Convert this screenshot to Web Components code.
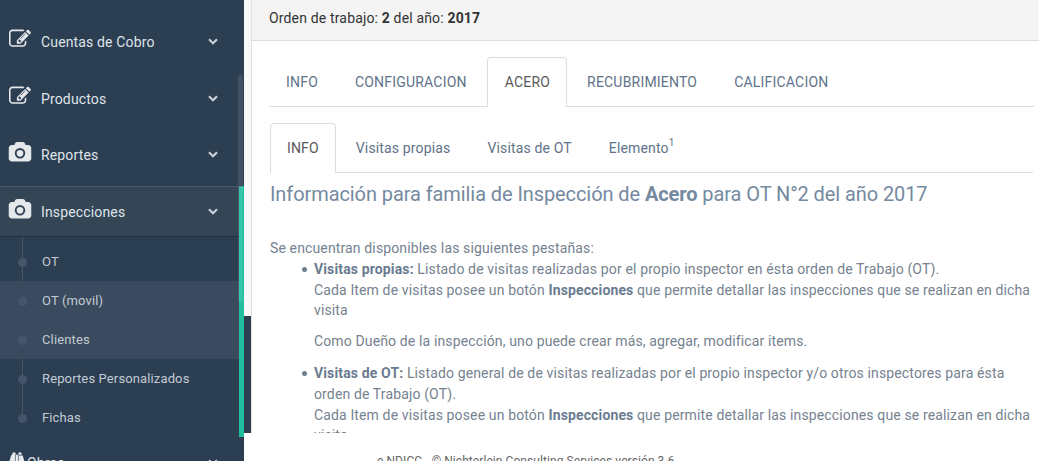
<!DOCTYPE html>
<html lang="es">
<head>
<meta charset="utf-8">
<title>Orden de trabajo</title>
<style>
html,body{margin:0;height:461px;overflow:hidden;background:#fff;font-family:Roboto,"Liberation Sans",sans-serif}
</style>
</head>
<body>
<template id="t-icon-edit"><svg viewBox="0 0 1792 1792" width="22" height="22" fill="currentColor"><path d="M888 1184l116-116-152-152-116 116v56h96v96h56zm440-720q-16-16-33 1l-350 350q-17 17-1 33t33-1l350-350q17-17 1-33zm80 594v190q0 119-84.5 203.5t-203.5 84.5h-832q-119 0-203.5-84.5t-84.5-203.5v-832q0-119 84.5-203.5t203.5-84.5h832q63 0 117 25 15 7 18 23 3 17-9 29l-49 49q-14 14-32 8-23-6-45-6h-832q-66 0-113 47t-47 113v832q0 66 47 113t113 47h832q66 0 113-47t47-113v-126q0-13 9-22l64-64q15-15 35-7t20 29zm-96-738l288 288-672 672h-288v-288zm444 132l-92 92-288-288 92-92q28-28 68-28t68 28l152 152q28 28 28 68t-28 68z"/></svg></template>
<template id="t-icon-camera"><svg viewBox="0 0 2048 1792" width="24" height="21" fill="currentColor" style="margin-left:-1px"><path d="M1024 672q119 0 203.500 84.500t84.500 203.500-84.500 203.500-203.500 84.500-203.500-84.500-84.500-203.500 84.500-203.500 203.500-84.500zm704-416q106 0 181 75t75 181v896q0 106-75 181t-181 75h-1408q-106 0-181-75t-75-181v-896q0-106 75-181t181-75h224l51-136q19-49 69.500-84.500t103.500-35.500h512q53 0 103.500 35.500t69.500 84.500l51 136h224zm-704 1152q185 0 316.500-131.500t131.500-316.500-131.500-316.500-316.500-131.500-316.500 131.500-131.500 316.500 131.500 316.500 316.500 131.500z"/></svg></template>
<template id="t-icon-binoculars"><svg viewBox="0 0 1792 1792" width="16" height="16" fill="currentColor"><path d="M704 320v768q0 26-19 45t-45 19v576q0 26-19 45t-45 19h-512q-26 0-45-19t-19-45v-512l249-873q7-23 31-23h424zm320 0v704h-256v-704h256zm768 960v512q0 26-19 45t-45 19h-512q-26 0-45-19t-19-45v-576q-26 0-45-19t-19-45v-768h424q24 0 31 23zm-1056-1184v224h-352v-224q0-14 9-23t23-9h288q14 0 23 9t9 23zm672 0v224h-352v-224q0-14 9-23t23-9h288q14 0 23 9t9 23z"/></svg></template>

<script>
function shadow(host, html){
  const r = host.attachShadow({mode:'open'});
  r.innerHTML = html;
  return r;
}
class SideItem extends HTMLElement{
  connectedCallback(){
    if(this.shadowRoot) return;
    const icon = this.getAttribute('icon');
    const tpl = document.getElementById('t-icon-'+icon);
    const r = shadow(this,`<style>
      :host{display:flex;flex:none;align-items:center;height:var(--row-h,51px);color:#dfe4e9;font-size:14px;letter-spacing:.15px;box-sizing:border-box;padding:0 var(--row-pr,26px) 0 9px}
      .ic{display:flex;justify-content:flex-start;width:32px;flex:none;color:#e6e9ec;margin-top:-5px}
      :host([icon=binoculars]) .ic{width:18px;padding-left:0;margin-top:-5px}
      :host([icon=camera]) .ic{margin-top:-4px}
      .lb{flex:1;white-space:nowrap}
      svg.ch{flex:none;margin-top:-1px}
    </style><span class="ic"></span><span class="lb"><slot></slot></span>
    <svg class="ch" width="10" height="7" viewBox="0 0 10 7"><path d="M1 1.200 5 5.200 9 1.200" fill="none" stroke="#c8d0d8" stroke-width="2.200"/></svg>`);
    r.querySelector('.ic').appendChild(tpl.content.cloneNode(true));
  }
}
class SideGroup extends HTMLElement{
  constructor(){super();shadow(this,`<style>
    :host{display:block;flex:none;border-top:1px solid #4a5a6a;border-right:5px solid #1fbf9f;margin-top:6px;box-sizing:border-box}
    .head{background:#344556;height:49px;display:block}
    .sub{display:block;border-top:1px solid #24303e;padding-top:5px;position:relative}
    .sub::before{content:"";position:absolute;left:22px;top:0;bottom:20px;width:1px;background:#445568}
  </style><div class="head"><slot name="head"></slot></div><div class="sub"><slot></slot></div>`);}
}
class SubItem extends HTMLElement{
  constructor(){super();shadow(this,`<style>
    :host{display:flex;align-items:center;height:39px;padding-left:42px;font-size:13px;letter-spacing:.13px;color:#c3cad2;position:relative;white-space:nowrap}
    :host([hl]){background:#3a4b5f}
    :host::before{content:"";position:absolute;left:18px;top:16px;width:9px;height:9px;border-radius:50%;background:#45566a}
    span{margin-top:-1px}
  </style><span><slot></slot></span>`);}
}
class AppSidebar extends HTMLElement{
  constructor(){super();shadow(this,`<style>
    :host{display:flex;flex-direction:column;flex:none;width:244px;height:461px;background:#2c3e52;overflow:hidden;position:relative;padding-top:16px;box-sizing:border-box}
    .list{display:flex;flex-direction:column;gap:6px;flex:none}
    .thumb{position:absolute;left:238px;top:75px;width:5px;height:227px;border-radius:3px;background:rgba(255,255,255,.1)}
  </style><div class="list"><slot name="top"></slot></div><slot></slot><div class="thumb"></div>`);}
}
class AppGutter extends HTMLElement{
  constructor(){super();shadow(this,`<style>
    :host{display:flex;flex-direction:column;flex:none;width:8px;height:433px;box-sizing:border-box;border-right:1px solid #e2e2e2}
    .a{height:316px;background:#f8f8f8}
    .b{flex:1;background:#2c3e52}
  </style><div class="a"></div><div class="b"></div>`);}
}
class WorkHeader extends HTMLElement{
  constructor(){super();shadow(this,`<style>
    :host{display:flex;align-items:center;height:41px;box-sizing:border-box;flex:none;background:#f4f4f4;border-bottom:1px solid #ddd;padding:0 0 4px 17px;font-size:14px;letter-spacing:.16px;color:#333}
    ::slotted(b){font-weight:700}
  </style><div><slot></slot></div>`);}
}
class TabBar extends HTMLElement{
  constructor(){super();shadow(this,`<style>
    :host{display:flex;height:50px;box-sizing:border-box;border-bottom:1px solid #ddd}
  </style><slot></slot>`);}
}
class TabItem extends HTMLElement{
  constructor(){super();shadow(this,`<style>
    :host{display:flex;align-items:center;height:50px;box-sizing:border-box;padding:0 19px 1px 16px;border:1px solid transparent;border-bottom:0;font-size:14px;letter-spacing:var(--ls,.2px);color:#607389;white-space:nowrap;border-radius:4px 4px 0 0}
    :host([active]){border-color:#ddd;background:#fff;color:#5a5a5a;padding:0 var(--pr,16px) 1px var(--pl,17px);margin-right:3px}
    ::slotted(sup){font-size:10px;line-height:0;position:relative;top:-1px}
  </style><span><slot></slot></span>`);}
}
class InfoBody extends HTMLElement{
  constructor(){super();shadow(this,`<style>
    :host{display:block;color:#75828f;font-size:14px;letter-spacing:.135px;line-height:20.800px}
    ::slotted(h3){margin:0;font-size:20px;font-weight:400;letter-spacing:-.085px;color:#75899f;line-height:28px;padding-top:7px;height:58px;box-sizing:content-box}
  </style><slot></slot>`);}
}
class BulletList extends HTMLElement{
  constructor(){super();shadow(this,`<style>
    :host{display:block;padding-left:44px}
  </style><slot></slot>`);}
}
class BulletItem extends HTMLElement{
  constructor(){super();shadow(this,`<style>
    :host{display:block;position:relative;margin-bottom:11px}
    :host::before{content:"";position:absolute;left:-12px;top:8px;width:5px;height:5px;border-radius:50%;background:#6f7f90}
    ::slotted(b){color:#6a7b90}
    ::slotted(p){margin:10px 0 0}
  </style><slot></slot>`);}
}
class AppFooter extends HTMLElement{
  constructor(){super();shadow(this,`<style>
    :host{display:block;height:28px;background:#fff;padding:21px 0 0 133px;box-sizing:border-box;font-size:12px;letter-spacing:.07px;line-height:15px;color:#666;white-space:nowrap;overflow:hidden}
  </style><slot></slot>`);}
}
class AppMain extends HTMLElement{
  constructor(){super();shadow(this,`<style>
    :host{display:flex;flex-direction:column;flex:1;min-width:0;height:433px;overflow:hidden}
    .body{flex:1;min-height:0;overflow:hidden;padding:16px 5px 0 17px}
    .inner{margin-top:16px;margin-left:1px;margin-right:1px}
  </style><slot name="head"></slot><div class="body"><slot name="outer"></slot><div class="inner"><slot name="inner"></slot><slot></slot></div></div>`);}
}
class AppShell extends HTMLElement{
  constructor(){super();shadow(this,`<style>
    :host{display:flex;width:1039px;height:461px;overflow:hidden;background:#fff;position:relative}
    .right{flex:1;min-width:0;display:flex;flex-direction:column}
    .top{display:flex;height:433px}
  </style><slot name="side"></slot><div class="right"><div class="top"><slot name="gutter"></slot><slot name="main"></slot></div><slot name="foot"></slot></div>`);}
}
[['app-shell',AppShell],['app-sidebar',AppSidebar],['side-item',SideItem],['side-group',SideGroup],['sub-item',SubItem],['app-gutter',AppGutter],['app-main',AppMain],['work-header',WorkHeader],['tab-bar',TabBar],['tab-item',TabItem],['info-body',InfoBody],['bullet-list',BulletList],['bullet-item',BulletItem],['app-footer',AppFooter]].forEach(([n,c])=>customElements.define(n,c));
</script>

<app-shell>
  <app-sidebar slot="side">
    <side-item slot="top" icon="edit">Cuentas de Cobro</side-item>
    <side-item slot="top" icon="edit">Productos</side-item>
    <side-item slot="top" icon="camera" style="margin-top:-1px">Reportes</side-item>
    <side-group>
      <side-item slot="head" icon="camera" style="--row-h:49px;--row-pr:21px">Inspecciones</side-item>
      <sub-item>OT</sub-item>
      <sub-item hl>OT (movil)</sub-item>
      <sub-item hl>Clientes</sub-item>
      <sub-item>Reportes Personalizados</sub-item>
      <sub-item>Fichas</sub-item>
    </side-group>
    <side-item icon="binoculars">Obras</side-item>
  </app-sidebar>
  <app-gutter slot="gutter"></app-gutter>
  <app-main slot="main">
    <work-header slot="head">Orden de trabajo: <b>2</b> del año: <b>2017</b></work-header>
    <tab-bar slot="outer">
      <tab-item>INFO</tab-item>
      <tab-item>CONFIGURACION</tab-item>
      <tab-item active>ACERO</tab-item>
      <tab-item>RECUBRIMIENTO</tab-item>
      <tab-item>CALIFICACION</tab-item>
    </tab-bar>
    <tab-bar slot="inner" style="--ls:.15px">
      <tab-item active style="--pl:16px;--pr:16px">INFO</tab-item>
      <tab-item>Visitas propias</tab-item>
      <tab-item>Visitas de OT</tab-item>
      <tab-item>Elemento<sup>1</sup></tab-item>
    </tab-bar>
    <info-body>
      <h3>Información para familia de Inspección de <b>Acero</b> para OT N°2 del año 2017</h3>
      Se encuentran disponibles las siguientes pestañas:
      <bullet-list>
        <bullet-item><b>Visitas propias:</b> Listado de visitas realizadas por el propio inspector en ésta orden de Trabajo (OT).<br>Cada Item de visitas posee un botón <b>Inspecciones</b> que permite detallar las inspecciones que se realizan en dicha visita<p>Como Dueño de la inspección, uno puede crear más, agregar, modificar items.</p></bullet-item>
        <bullet-item><b>Visitas de OT:</b> Listado general de de visitas realizadas por el propio inspector y/o otros inspectores para ésta orden de Trabajo (OT).<br>Cada Item de visitas posee un botón <b>Inspecciones</b> que permite detallar las inspecciones que se realizan en dicha visita</bullet-item>
      </bullet-list>
    </info-body>
  </app-main>
  <app-footer slot="foot">e NDICC - © Nichterlein Consulting Services versión 3.6</app-footer>
</app-shell>
</body>
</html>
